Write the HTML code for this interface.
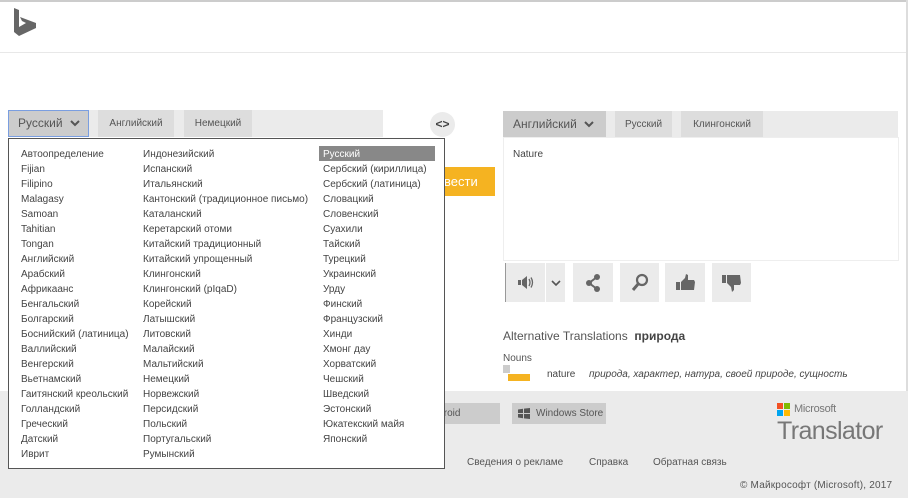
<!DOCTYPE html>
<html><head><meta charset="utf-8">
<style>
*{margin:0;padding:0;box-sizing:border-box}
body{width:908px;height:498px;position:relative;overflow:hidden;background:#fff;font-family:"Liberation Sans","DejaVu Sans",sans-serif;color:#444;font-size:10px}
.a{position:absolute}
.tab{position:absolute;background:#ddd;color:#555;font-size:10px;line-height:28px;text-align:center}
.btn{position:absolute;background:#ebebeb;top:263px;height:39px}
.col div{height:15px;line-height:15px;white-space:nowrap;color:#444}
</style></head><body>
<div class="a" style="left:0;top:0;width:908px;height:2px;background:#ccc"></div>
<div class="a" style="left:0;top:52px;width:908px;height:1px;background:#e8e8e8"></div>
<div class="a" style="left:906px;top:0;width:2px;height:391px;background:#ddd"></div>
<svg class="a" style="left:13px;top:8px" width="24" height="28" viewBox="0 0 24 28"><path d="M1 0 L6 2 L6 19 L13 15 L9 13 L7 9 L23 15 L23 20 L6 28 L1 24 Z" fill="#666"/></svg>

<!-- left bar -->
<div class="a" style="left:8px;top:110px;width:375px;height:27px;background:#ebebeb"></div>
<div class="a" style="left:8px;top:110px;width:81px;height:27px;background:#ccc;border:1px solid #7a9ee0;font-size:12px;line-height:25px;padding-left:9px;color:#555">Русский <svg width="10" height="8" viewBox="0 0 10 8" style="margin-left:4px"><path d="M1 2 L5 6 L9 2" stroke="#555" stroke-width="2" fill="none"/></svg></div>
<div class="tab" style="left:98px;top:110px;width:76px;height:27px">Английский</div>
<div class="tab" style="left:184px;top:110px;width:68px;height:27px">Немецкий</div>
<div class="a" style="left:430px;top:112px;width:25px;height:25px;border-radius:50%;background:#ebebeb;text-align:center;line-height:25px;font-size:12px;font-weight:bold;color:#444">&lt;&gt;</div>
<div class="a" style="left:428px;top:167px;width:67px;height:29px;background:#f5b321;overflow:hidden"></div>
<div class="a" style="left:413px;top:167px;color:#fff;font-size:13px;line-height:29px;white-space:nowrap">Перевести</div>

<!-- right -->
<div class="a" style="left:503px;top:111px;width:395px;height:26px;background:#ebebeb"></div>
<div class="a" style="left:503px;top:111px;width:103px;height:26px;background:#ccc;font-size:12px;line-height:26px;padding-left:10px;color:#555">Английский <svg width="10" height="8" viewBox="0 0 10 8" style="margin-left:4px"><path d="M1 2 L5 6 L9 2" stroke="#555" stroke-width="2" fill="none"/></svg></div>
<div class="tab" style="left:615px;top:111px;width:57px;height:26px;line-height:27px">Русский</div>
<div class="tab" style="left:681px;top:111px;width:82px;height:26px;line-height:27px">Клингонский</div>
<div class="a" style="left:503px;top:137px;width:396px;height:124px;border:1px solid #eee;padding:11px 9px;font-size:10px;color:#444">Nature</div>
<div class="a" style="left:505px;top:263px;width:1px;height:39px;background:#999"></div>
<div class="btn" style="left:506px;width:39px"><svg class="a" style="left:12px;top:13px" width="16" height="13" viewBox="0 0 16 13"><rect x="0" y="4" width="3" height="5" fill="#666"/><path d="M4 4 L9 0 L9 13 L4 9Z" fill="#666"/><path d="M11 3 Q13 6.5 11 10 M13 1.5 Q16 6.5 13 11.5" stroke="#666" stroke-width="1.3" fill="none"/></svg></div>
<div class="btn" style="left:546px;width:19px"><svg class="a" style="left:5px;top:17px" width="10" height="7" viewBox="0 0 10 7"><path d="M1 1 L5 5 L9 1" stroke="#555" stroke-width="1.6" fill="none"/></svg></div>
<div class="btn" style="left:573px;width:40px"><svg class="a" style="left:12px;top:11px" width="16" height="18" viewBox="0 0 16 18"><path d="M12 3 L4 9 L12 15" stroke="#666" stroke-width="2" fill="none"/><circle cx="12" cy="3" r="3" fill="#666"/><circle cx="4" cy="9" r="3" fill="#666"/><circle cx="12" cy="15" r="3" fill="#666"/></svg></div>
<div class="btn" style="left:620px;width:39px"><svg class="a" style="left:11px;top:10px" width="18" height="19" viewBox="0 0 18 19"><circle cx="11" cy="7" r="5" stroke="#666" stroke-width="2.2" fill="none"/><path d="M7.5 10.5 L2 17" stroke="#666" stroke-width="3"/></svg></div>
<div class="btn" style="left:665px;width:40px"><svg class="a" style="left:11px;top:11px" width="19" height="17" viewBox="0 0 19 17"><rect x="0" y="8" width="4" height="8" fill="#666"/><path d="M5 8 L9 4 L10 0 L12 1 L12 6 L18 6 L19 8 L18 16 L5 16Z" fill="#666"/></svg></div>
<div class="btn" style="left:712px;width:39px"><svg class="a" style="left:10px;top:12px" width="19" height="17" viewBox="0 0 19 17"><rect x="0" y="0" width="4" height="8" fill="#666"/><path d="M5 0 L18 0 L19 8 L18 10 L12 10 L12 15 L10 17 L9 12 L5 8Z" fill="#666"/></svg></div>

<div class="a" style="left:503px;top:329px;font-size:12px;color:#555">Alternative Translations&nbsp; <b style="color:#444">природа</b></div>
<div class="a" style="left:503px;top:353px;font-size:10px;color:#555">Nouns</div>
<div class="a" style="left:503px;top:365px;width:7px;height:8px;background:#ccc"></div>
<div class="a" style="left:508px;top:374px;width:22px;height:7px;background:#f5b321"></div>
<div class="a" style="left:547px;top:369px;font-size:10px;color:#444">nature</div>
<div class="a" style="left:589px;top:369px;font-size:10px;color:#444;font-style:italic">природа, характер, натура, своей природе, сущность</div>

<!-- footer -->
<div class="a" style="left:0;top:391px;width:908px;height:107px;background:#ebebeb"></div>
<div class="a" style="left:420px;top:403px;width:80px;height:21px;background:#ccc;font-size:10px;line-height:21px;padding-left:6px;color:#555">Android</div>
<div class="a" style="left:512px;top:403px;width:94px;height:21px;background:#ccc;font-size:10px;line-height:21px;padding-left:24px;color:#555"><svg class="a" style="left:6px;top:5px" width="12" height="11" viewBox="0 0 12 11"><path d="M0 1.5 L5 0.8 L5 5 L0 5Z M6 0.6 L12 0 L12 5 L6 5Z M0 6 L5 6 L5 10.2 L0 9.5Z M6 6 L12 6 L12 11 L6 10.4Z" fill="#555"/></svg>Windows Store</div>
<div class="a" style="left:777px;top:403px;width:13px;height:13px">
<div class="a" style="left:0;top:0;width:6px;height:6px;background:#f25022"></div><div class="a" style="left:7px;top:0;width:6px;height:6px;background:#7fba00"></div><div class="a" style="left:0;top:7px;width:6px;height:6px;background:#00a4ef"></div><div class="a" style="left:7px;top:7px;width:6px;height:6px;background:#ffb900"></div></div>
<div class="a" style="left:794px;top:403px;font-size:11px;color:#777;letter-spacing:-0.3px">Microsoft</div>
<div class="a" style="left:777px;top:417px;font-size:25px;color:#777;letter-spacing:-0.6px">Translator</div>
<div class="a" style="left:467px;top:457px;font-size:10px;color:#555">Сведения о рекламе</div>
<div class="a" style="left:589px;top:457px;font-size:10px;color:#555">Справка</div>
<div class="a" style="left:653px;top:457px;font-size:10px;color:#555">Обратная связь</div>
<div class="a" style="left:740px;top:480px;font-size:10px;color:#555;letter-spacing:0.2px">© Майкрософт (Microsoft), 2017</div>

<!-- dropdown -->
<div class="a" style="left:8px;top:138px;width:437px;height:331px;background:#fff;border:1px solid #555"></div>
<div class="a col" style="left:21px;top:147px">
<div>Автоопределение</div><div>Fijian</div><div>Filipino</div><div>Malagasy</div><div>Samoan</div><div>Tahitian</div><div>Tongan</div><div>Английский</div><div>Арабский</div><div>Африкаанс</div><div>Бенгальский</div><div>Болгарский</div><div>Боснийский (латиница)</div><div>Валлийский</div><div>Венгерский</div><div>Вьетнамский</div><div>Гаитянский креольский</div><div>Голландский</div><div>Греческий</div><div>Датский</div><div>Иврит</div></div>
<div class="a col" style="left:143px;top:147px">
<div>Индонезийский</div><div>Испанский</div><div>Итальянский</div><div>Кантонский (традиционное письмо)</div><div>Каталанский</div><div>Керетарский отоми</div><div>Китайский традиционный</div><div>Китайский упрощенный</div><div>Клингонский</div><div>Клингонский (pIqaD)</div><div>Корейский</div><div>Латышский</div><div>Литовский</div><div>Малайский</div><div>Мальтийский</div><div>Немецкий</div><div>Норвежский</div><div>Персидский</div><div>Польский</div><div>Португальский</div><div>Румынский</div></div>
<div class="a" style="left:319px;top:146px;width:116px;height:15px;background:#888"></div>
<div class="a col" style="left:323px;top:147px">
<div style="color:#fff">Русский</div><div>Сербский (кириллица)</div><div>Сербский (латиница)</div><div>Словацкий</div><div>Словенский</div><div>Суахили</div><div>Тайский</div><div>Турецкий</div><div>Украинский</div><div>Урду</div><div>Финский</div><div>Французский</div><div>Хинди</div><div>Хмонг дау</div><div>Хорватский</div><div>Чешский</div><div>Шведский</div><div>Эстонский</div><div>Юкатекский майя</div><div>Японский</div></div>
</body></html>
